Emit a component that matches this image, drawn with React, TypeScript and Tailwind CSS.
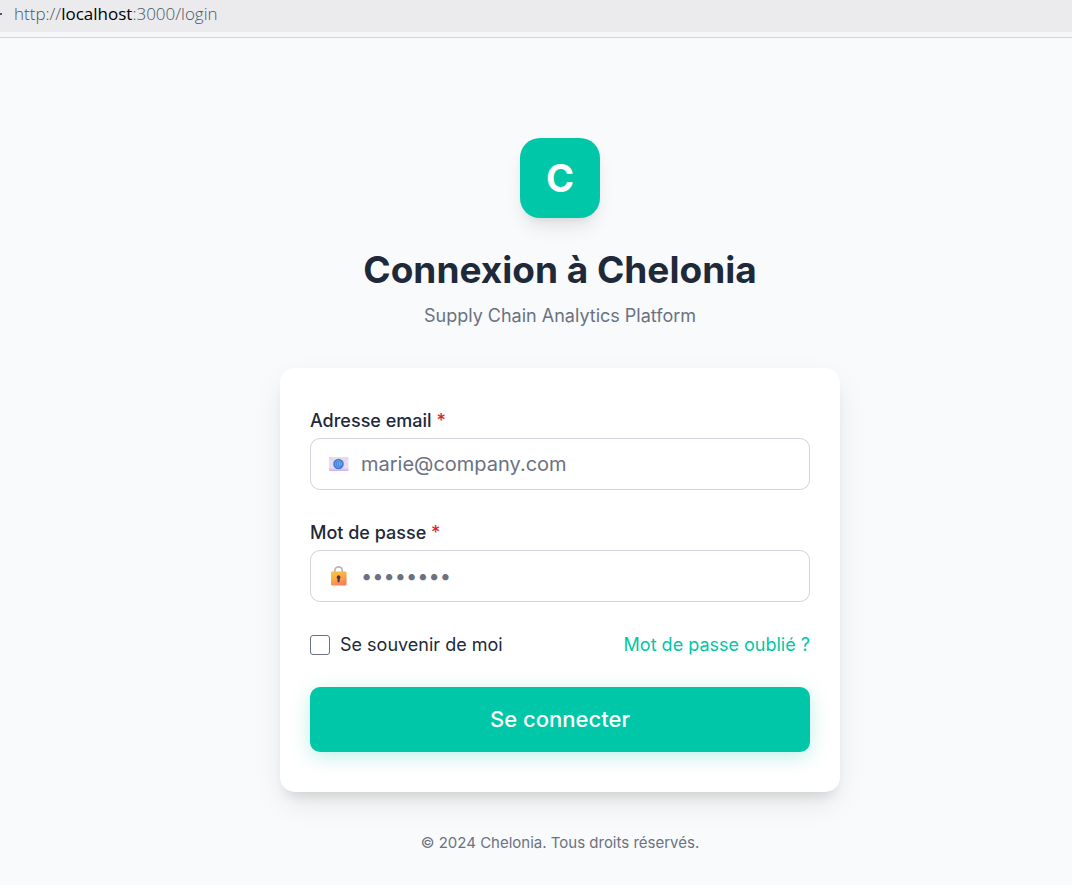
import { useId } from "react";
import type { ReactNode } from "react";

function EnvelopeIcon() {
  return (
    <svg viewBox="0 0 20 20" className="size-5" aria-hidden="true">
      <defs>
        <linearGradient id="envelope" x1="0" y1="0" x2="0" y2="1">
          <stop offset="0" stopColor="#e6dde8" />
          <stop offset="0.75" stopColor="#e8ddf2" />
          <stop offset="1" stopColor="#d0adf2" />
        </linearGradient>
      </defs>
      <rect x="0" y="3" width="19.5" height="14" rx="0.5" fill="url(#envelope)" />
      <path d="M0.5 3.5 9.7 11 19 3.5" fill="none" stroke="#d9cbe2" strokeWidth="0.7" />
      <circle cx="9.5" cy="10" r="5.3" fill="#3c7fd6" />
      <circle cx="9.5" cy="10" r="1.4" fill="none" stroke="#a5baf0" strokeWidth="0.7" />
      <path
        d="M10.9 8.4v2.1c0 1.4 1.8 1.2 1.8-.5a3.2 3.2 0 1 0-1.5 2.7"
        fill="none"
        stroke="#a5baf0"
        strokeWidth="0.6"
      />
    </svg>
  );
}

function LockIcon() {
  return (
    <svg viewBox="0 0 20 20" className="size-5" aria-hidden="true">
      <defs>
        <linearGradient id="lock" x1="0" y1="0" x2="0.5" y2="1">
          <stop offset="0" stopColor="#fbc63c" />
          <stop offset="0.5" stopColor="#fbae47" />
          <stop offset="1" stopColor="#fa8059" />
        </linearGradient>
      </defs>
      <path
        d="M5.9 7V4.5a3.7 3.7 0 0 1 7.4 0V7"
        fill="none"
        stroke="#b9b2c0"
        strokeWidth="1.7"
      />
      <rect x="2" y="5.5" width="15.5" height="14" rx="1.2" fill="url(#lock)" />
      <path
        d="M9.6 9.3a2 2 0 0 0-1.1 3.6v2.4a1.1 1.1 0 0 0 2.2 0v-2.4a2 2 0 0 0-1.1-3.6Z"
        fill="#4b3850"
      />
    </svg>
  );
}

type FieldProps = {
  label: string;
  type: string;
  placeholder: string;
  autoComplete: string;
  icon: ReactNode;
};

function Field({ label, type, placeholder, autoComplete, icon }: FieldProps) {
  const id = useId();
  return (
    <div className="flex flex-col gap-[5px]">
      <label htmlFor={id} className="text-[18px] leading-[25px] font-medium text-gray-800">
        {label} <span className="text-[#e02424]">*</span>
      </label>
      <div className="flex h-13 items-center gap-3 rounded-[10px] border border-gray-300 bg-white pr-4 pl-[18px] focus-within:border-[#00c7a7]">
        {icon}
        <input
          id={id}
          type={type}
          required
          placeholder={placeholder}
          autoComplete={autoComplete}
          className="min-w-0 flex-1 bg-transparent text-xl text-gray-800 outline-none placeholder:text-gray-500"
        />
      </div>
    </div>
  );
}

export default function App() {
  return (
    <div className="flex min-h-screen flex-col bg-gray-50 font-['Inter',sans-serif] text-gray-800">
      <header className="border-b border-gray-300 bg-[#f7f7f9] pb-[5px]">
        <div className="flex h-8 items-center overflow-hidden bg-[#ebebed] pb-1 font-['Open_Sans',sans-serif] text-[17px] leading-6 font-light text-gray-600">
          <span className="mr-3 h-0.5 w-0.5 bg-gray-600" />
          <span>
            http://<span className="font-normal text-black">localhost</span>:3000/login
          </span>
        </div>
      </header>

      <main className="flex flex-1 flex-col items-center pt-25 pr-0 pb-8 sm:pl-12">
        <div className="flex size-20 items-center justify-center rounded-[20px] bg-[#00c7a7] text-[38px] font-bold text-white shadow-[0_12px_19px_-4px_rgb(0_0_0/0.1),0_5px_8px_-5px_rgb(0_0_0/0.1)]">
          C
        </div>
        <h1 className="mt-7 text-center text-[37px] leading-12 font-bold">Connexion à Chelonia</h1>
        <p className="mt-2 text-center text-[18px] leading-7 text-gray-500">
          Supply Chain Analytics Platform
        </p>

        <form
          onSubmit={(event) => event.preventDefault()}
          className="mt-[38px] flex w-full max-w-140 flex-col gap-[30px] rounded-[15px] bg-white px-[30px] py-10 shadow-[0_12px_31px_-4px_rgb(0_0_0/0.1),0_10px_12px_-6px_rgb(0_0_0/0.1)]"
        >
          <Field
            label="Adresse email"
            type="email"
            placeholder="marie@company.com"
            autoComplete="email"
            icon={<EnvelopeIcon />}
          />
          <Field
            label="Mot de passe"
            type="password"
            placeholder="••••••••"
            autoComplete="current-password"
            icon={<LockIcon />}
          />
          <div className="flex items-center justify-between text-[18px] leading-[25px]">
            <label className="flex items-center gap-2.5">
              <input
                type="checkbox"
                className="size-5 appearance-none rounded-[3px] border border-gray-500 bg-white checked:bg-[#00c7a7]"
              />
              Se souvenir de moi
            </label>
            <a href="#reset" className="text-[#00c7a7]">
              Mot de passe oublié ?
            </a>
          </div>
          <button
            type="submit"
            className="h-[65px] rounded-[10px] bg-[#00c7a7] text-[22px] font-medium text-white shadow-[0_5px_19px_rgb(0_199_167/0.25)]"
          >
            Se connecter
          </button>
        </form>

        <p className="mt-10 text-center text-[15px] leading-[22px] text-gray-500">
          © 2024 Chelonia. Tous droits réservés.
        </p>
      </main>
    </div>
  );
}
